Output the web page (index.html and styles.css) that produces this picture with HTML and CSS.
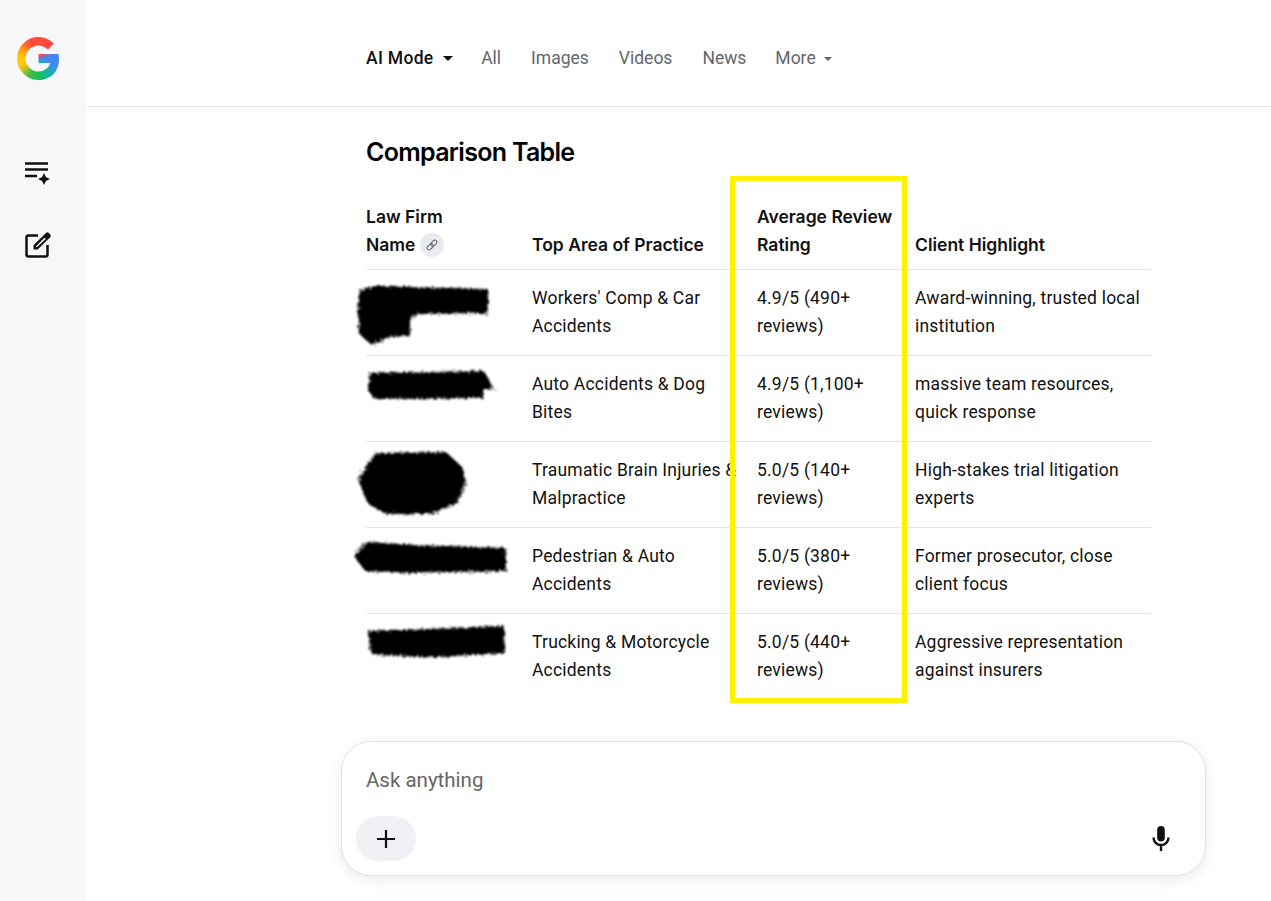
FILE: index.html
```html
<!DOCTYPE html>
<html>
<head>
    <title>Comparison Table - AI Mode</title>
    <meta charset="UTF-8">
    <link rel="stylesheet" href="styles.css">
</head>
<body>
    <svg class="defs" width="0" height="0">
        <filter id="rough" x="-10%" y="-20%" width="120%" height="140%">
            <feTurbulence type="fractalNoise" baseFrequency="0.45" numOctaves="2" seed="4"/>
            <feDisplacementMap in="SourceGraphic" scale="7"/>
            <feGaussianBlur stdDeviation="1"/>
        </filter>
    </svg>

    <aside class="sidebar">
        <div class="logo"></div>
        <svg class="side-icon list-icon" width="28" height="28" viewBox="0 0 28 28">
            <path d="M1 3.500h23M1 9.500h23M1 16h12" stroke="#111" stroke-width="2.600" fill="none"/>
            <path d="M20 13l1.900 4.100 4.100 1.900-4.100 1.900-1.900 4.100-1.900-4.100-4.100-1.900 4.100-1.900z" fill="#111"/>
        </svg>
        <svg class="side-icon edit-icon" width="28" height="28" viewBox="0 0 28 28">
            <path d="M14 4.500H4.500a2 2 0 0 0-2 2v17a2 2 0 0 0 2 2h17a2 2 0 0 0 2-2V14" stroke="#111" stroke-width="2.500" fill="none"/>
            <path d="M9.500 18.500v-4.200L22 2a2 2 0 0 1 2.800 0l1.400 1.400a2 2 0 0 1 0 2.800L13.700 18.500z" fill="#111"/>
            <path d="M12 16l0-.8L20.500 6.800l1.200 1.200L13 16z" fill="#fff"/>
        </svg>
    </aside>

    <div class="page">
        <header class="topbar">
            <nav class="tabs">
                <a class="active" href="#">AI Mode <span class="caret"></span></a>
                <a href="#">All</a>
                <a href="#">Images</a>
                <a href="#">Videos</a>
                <a href="#">News</a>
                <a class="more" href="#">More <span class="caret small"></span></a>
            </nav>
        </header>

        <main class="content">
            <h2>Comparison Table</h2>
            <div class="highlight"></div>
            <table>
                <thead>
                    <tr>
                        <th class="col-firm">Law Firm Name
                            <span class="link-chip">
                                <svg width="14" height="14" viewBox="0 0 12 12">
                                    <g transform="rotate(-45 6 6)" stroke="#666" stroke-width="0.900" fill="none">
                                        <rect x="0.800" y="4.300" width="6" height="3.400" rx="1.700"/>
                                        <rect x="5.200" y="4.300" width="6" height="3.400" rx="1.700"/>
                                    </g>
                                </svg>
                            </span>
                        </th>
                        <th class="col-area">Top Area of Practice</th>
                        <th class="col-rating">Average Review Rating</th>
                        <th>Client Highlight</th>
                    </tr>
                </thead>
                <tbody>
                    <tr>
                        <td class="firm">
                            <svg class="scribble" width="170" height="86" viewBox="0 0 170 86">
                                <polygon points="14,20 30,16 142,19 142,43 70,44 64,50 64,66 42,67 26,75 13,64 12,40"/>
                            </svg>
                        </td>
                        <td>Workers' Comp &amp; Car Accidents</td>
                        <td>4.9/5 (490+ reviews)</td>
                        <td>Award-winning, trusted local institution</td>
                    </tr>
                    <tr>
                        <td class="firm">
                            <svg class="scribble" width="170" height="86" viewBox="0 0 170 86">
                                <polygon points="24,17 138,15 148,33 138,33 136,42 28,43 22,34"/>
                            </svg>
                        </td>
                        <td>Auto Accidents &amp; Dog Bites</td>
                        <td>4.9/5 (1,100+ reviews)</td>
                        <td>massive team resources, quick response</td>
                    </tr>
                    <tr>
                        <td class="firm">
                            <svg class="scribble" width="170" height="86" viewBox="0 0 170 86">
                                <polygon points="30,11 100,10 116,25 120,40 111,61 85,72 40,72 22,62 12,38 20,25"/>
                            </svg>
                        </td>
                        <td>Traumatic Brain Injuries &amp; Malpractice</td>
                        <td>5.0/5 (140+ reviews)</td>
                        <td>High-stakes trial litigation experts</td>
                    </tr>
                    <tr>
                        <td class="firm">
                            <svg class="scribble" width="170" height="86" viewBox="0 0 170 86">
                                <polygon points="20,14 70,17 160,20 160,43 60,45 19,43 8,28"/>
                            </svg>
                        </td>
                        <td>Pedestrian &amp; Auto Accidents</td>
                        <td>5.0/5 (380+ reviews)</td>
                        <td>Former prosecutor, close client focus</td>
                    </tr>
                    <tr>
                        <td class="firm">
                            <svg class="scribble" width="170" height="86" viewBox="0 0 170 86">
                                <polygon points="22,17 80,15 158,12 159,39 90,43 25,41"/>
                            </svg>
                        </td>
                        <td>Trucking &amp; Motorcycle Accidents</td>
                        <td>5.0/5 (440+ reviews)</td>
                        <td>Aggressive representation against insurers</td>
                    </tr>
                </tbody>
            </table>
        </main>

        <div class="composer">
            <div class="placeholder">Ask anything</div>
            <div class="composer-row">
                <button class="plus" type="button">
                    <svg width="18" height="18" viewBox="0 0 18 18">
                        <path d="M9 0v18M0 9h18" stroke="#111" stroke-width="2.200" fill="none"/>
                    </svg>
                </button>
                <svg class="mic" width="20" height="25" viewBox="0 0 20 25">
                    <path d="M10 0a3.800 3.800 0 0 1 3.800 3.800v8a3.800 3.800 0 0 1-7.600 0v-8A3.800 3.800 0 0 1 10 0z" fill="#111"/>
                    <path d="M2.500 11.500a7.500 7.500 0 0 0 15 0M10 19V25" stroke="#111" stroke-width="2.400" fill="none"/>
                </svg>
            </div>
        </div>
    </div>
</body>
</html>
```

FILE: styles.css
```css
body {
    margin: 0;
    height: 901px;
    overflow: hidden;
    display: flex;
    font-family: Roboto, "Liberation Sans", sans-serif;
    font-size: 17.5px;
    letter-spacing: 0.2px;
    color: #111;
    background-color: #fff;
}

.defs {
    position: absolute;
}

.sidebar {
    width: 86px;
    flex-shrink: 0;
    background-color: #f6f7f9;
    display: flex;
    flex-direction: column;
    align-items: flex-start;
    padding: 37px 0 0 17px;
    box-sizing: border-box;
}

.logo {
    width: 42px;
    height: 43px;
    background: conic-gradient(#ff4a3d 0deg, #ff4a3d 45deg, #4285f4 80deg, #3f8ff0 115deg, #0fb5a0 145deg, #1cbc5e 175deg, #3dbb4a 205deg, #fbc41a 245deg, #ffcc00 275deg, #ff8a1e 305deg, #ff4a3d 335deg, #ff4a3d 360deg);
    clip-path: path("M37 6.600A21.500 21.500 0 1 0 21.500 43C33 43 42 35 42 22.500C42 20 41.800 18.500 41.500 17L21.500 17L21.500 26L33.400 26A13 13 0 0 1 21.500 34.500A13 13 0 1 1 31 12.600Z");
}

.side-icon {
    display: block;
}

.list-icon {
    margin: 80px 0 0 7px;
}

.edit-icon {
    margin: 43px 0 0 7px;
}

.page {
    flex: 1;
    min-width: 0;
    display: flex;
    flex-direction: column;
}

.topbar {
    height: 106px;
    border-bottom: 1px solid #e3e3e8;
    padding-left: 280px;
    display: flex;
    align-items: center;
}

.tabs {
    display: flex;
    gap: 30px;
    margin-top: 10px;
    letter-spacing: 0;
}

.tabs a {
    color: #62666b;
    text-decoration: none;
    line-height: 24px;
}

.tabs a.active {
    color: #111;
    font-weight: 500;
    letter-spacing: 0.3px;
    margin-right: -2px;
}

.tabs a.more {
    margin-left: -1px;
}

.caret {
    display: inline-block;
    width: 0;
    height: 0;
    margin: 0 0 3px 5px;
    border-left: 5px solid transparent;
    border-right: 5px solid transparent;
    border-top: 5px solid #111;
}

.caret.small {
    margin-left: 4px;
    border-left-width: 4.500px;
    border-right-width: 4.500px;
    border-top: 4.500px solid #62666b;
}

.content {
    position: relative;
    flex: 1;
    padding: 28px 0 0 280px;
}

h2 {
    margin: 0 0 34px 0;
    font-family: Inter, Roboto, sans-serif;
    font-size: 25px;
    font-weight: 600;
    line-height: 34px;
    letter-spacing: -0.7px;
    color: #000;
}

.highlight {
    position: absolute;
    left: 644px;
    top: 69px;
    width: 177px;
    height: 527px;
    box-sizing: border-box;
    border: 5px solid #fff200;
    z-index: 2;
}

table {
    width: 785px;
    table-layout: fixed;
    border-collapse: separate;
    border-spacing: 0;
}

th {
    text-align: left;
    vertical-align: bottom;
    font-family: Inter, Roboto, sans-serif;
    font-size: 17.500px;
    font-weight: 600;
    letter-spacing: 0;
    line-height: 28px;
    padding: 0 0 10px 0;
    border-bottom: 1px solid #e3e3e8;
}

.col-firm {
    width: 166px;
    padding-right: 60px;
    box-sizing: border-box;
}

.col-area {
    width: 225px;
}

.col-rating {
    width: 158px;
    padding-right: 12px;
    box-sizing: border-box;
}

td {
    padding: 14px 18px 15px 0;
    height: 56px;
    line-height: 28px;
    vertical-align: top;
    border-bottom: 1px solid #e3e3e8;
}

td:last-child {
    padding-right: 0;
}

tbody tr:last-child td {
    border-bottom: none;
}

.firm {
    position: relative;
}

.scribble {
    position: absolute;
    left: -20px;
    top: 0;
    fill: #000;
    filter: url(#rough);
}

.link-chip {
    display: inline-flex;
    align-items: center;
    justify-content: center;
    width: 24px;
    height: 24px;
    margin-left: 0;
    border-radius: 50%;
    background-color: #e9eaef;
    vertical-align: -1px;
}

.composer {
    position: absolute;
    left: 341px;
    top: 741px;
    width: 865px;
    height: 135px;
    box-sizing: border-box;
    padding: 24px 14px 14px 14px;
    background-color: #fff;
    border: 1px solid #dfe1e5;
    border-radius: 30px;
    box-shadow: 0 4px 14px rgba(60, 64, 67, 0.1);
    z-index: 3;
}

.placeholder {
    padding-left: 10px;
    font-size: 20.500px;
    letter-spacing: 0;
    line-height: 28px;
    color: #666;
}

.composer-row {
    display: flex;
    justify-content: space-between;
    align-items: center;
    margin-top: 22px;
}

.plus {
    width: 60px;
    height: 45px;
    border: none;
    border-radius: 23px;
    background-color: #f0f1f5;
    display: flex;
    align-items: center;
    justify-content: center;
    padding: 0;
}

.mic {
    margin-right: 20px;
}
```
